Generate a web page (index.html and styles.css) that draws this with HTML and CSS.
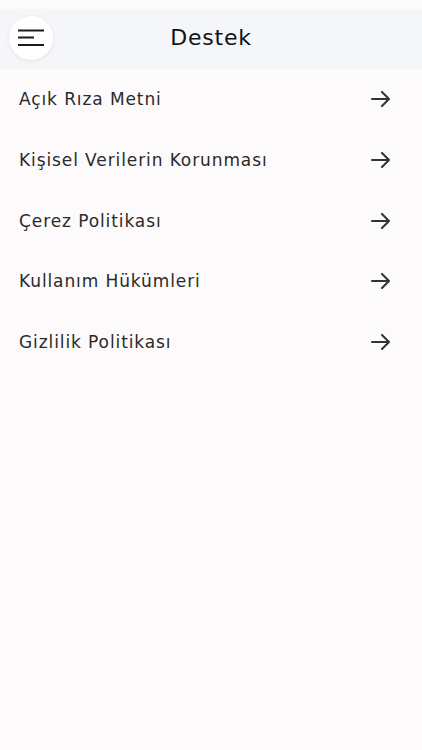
FILE: index.html
```html
<!DOCTYPE html>
<html lang="tr">
<head>
  <meta charset="UTF-8" />
  <meta name="viewport" content="width=device-width, initial-scale=1.0"/>
  <title>Destek</title>
  <link rel="stylesheet" href="styles.css">
</head>
<body>

  <header class="topbar">
    <button class="menu-btn" aria-label="Menü">
      <svg width="26" height="18" viewBox="0 0 26 18">
        <path d="M0 1.5H26M0 8.5H16M0 16H26" stroke="#1a1a1a" stroke-width="2.2" fill="none"/>
      </svg>
    </button>
    <h1>Destek</h1>
  </header>

  <ul class="links">
    <li><a href="#">Açık Rıza Metni <span class="arrow"></span></a></li>
    <li><a href="#">Kişisel Verilerin Korunması <span class="arrow"></span></a></li>
    <li><a href="#">Çerez Politikası <span class="arrow"></span></a></li>
    <li><a href="#">Kullanım Hükümleri <span class="arrow"></span></a></li>
    <li><a href="#">Gizlilik Politikası <span class="arrow"></span></a></li>
  </ul>

</body>
</html>
```

FILE: styles.css
```css
body {
  margin: 0;
  font-family: 'DejaVu Sans', sans-serif;
  background-color: #fdfafc;
  color: #1e1e1e;
}
.topbar {
  margin-top: 9px;
  height: 60px;
  background-color: #f5f6fa;
  display: flex;
  align-items: center;
  justify-content: center;
  position: relative;
}
.topbar h1 {
  margin: 0 0 3px 0;
  font-size: 22px;
  font-weight: normal;
  letter-spacing: 0.8px;
  color: #111;
}
.menu-btn {
  position: absolute;
  left: 9px;
  top: 7px;
  width: 44px;
  height: 44px;
  border-radius: 50%;
  border: none;
  background: #fff;
  box-shadow: 0 1px 4px rgba(0, 0, 0, 0.08);
  display: flex;
  align-items: center;
  justify-content: center;
  padding: 0;
}
.links {
  list-style: none;
  margin: 0;
  padding: 0;
}
.links a {
  display: flex;
  align-items: center;
  justify-content: space-between;
  height: 60.7px;
  padding: 0 31px 0 19px;
  color: #2a2a2a;
  text-decoration: none;
  font-size: 17px;
  letter-spacing: 0.9px;
}
.arrow {
  width: 20px;
  height: 16px;
  background: url("data:image/svg+xml,%3Csvg xmlns='http://www.w3.org/2000/svg' viewBox='0 0 20 16'%3E%3Cpath d='M1 8H18M11 1L18 8L11 15' stroke='%23333' stroke-width='2' fill='none' stroke-linecap='round' stroke-linejoin='round'/%3E%3C/svg%3E") no-repeat center;
}
```
